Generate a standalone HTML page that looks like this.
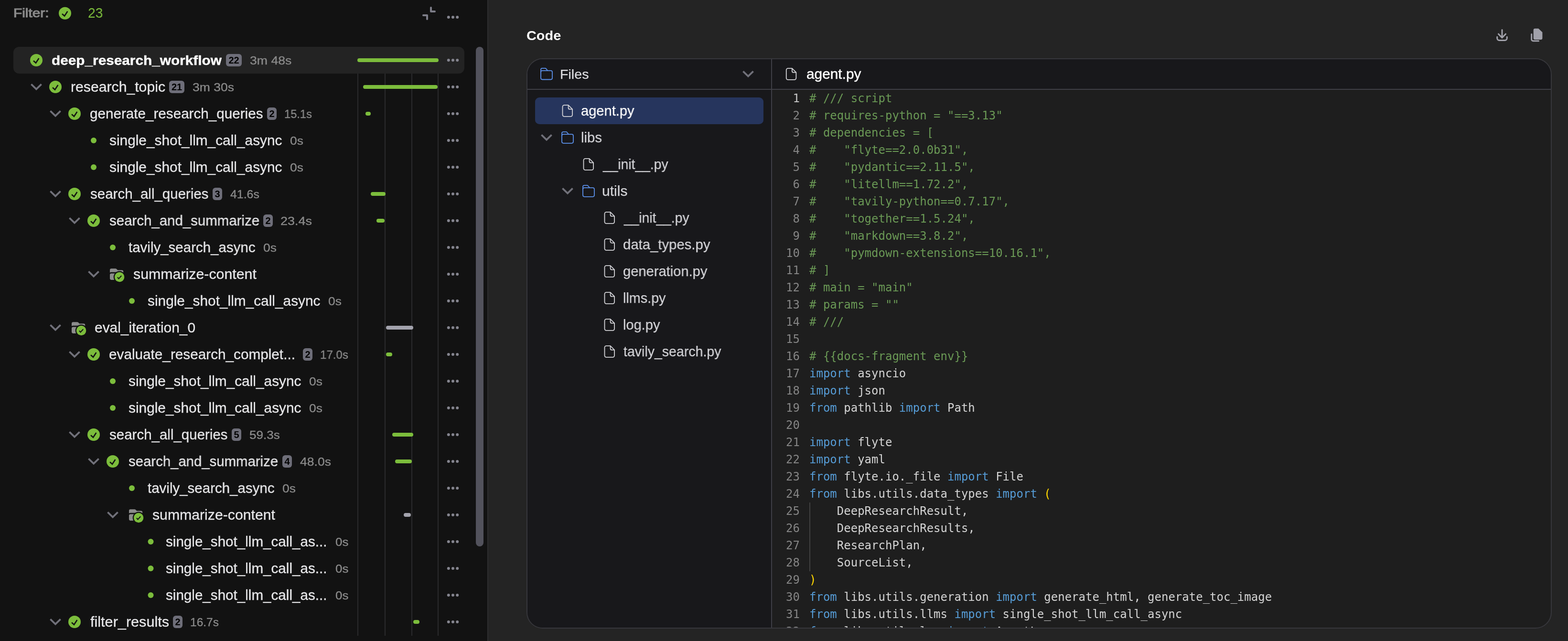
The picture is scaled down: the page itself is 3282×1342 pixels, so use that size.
<!DOCTYPE html><html><head><meta charset="utf-8"><title>Run details</title><style>
html,body{margin:0;padding:0;background:#242424}body{width:3282px;height:1342px;position:relative;overflow:hidden;font-family:'Liberation Sans', sans-serif}
.t{position:absolute;white-space:pre;line-height:0;transform-origin:0 0;will-change:transform}
</style></head><body>
<div style="position:absolute;left:0px;top:0px;width:1020px;height:1342px;background:#121212;border-radius:0px;"></div>
<div style="position:absolute;left:1020px;top:0px;width:2px;height:1342px;background:#2e2e30;border-radius:0px;"></div>
<div style="position:absolute;left:28px;top:98px;width:944px;height:56px;background:#232323;border-radius:12px;"></div>
<div style="position:absolute;left:748px;top:154px;width:2px;height:1177px;background:#2a2a2c;border-radius:0px;"></div>
<div style="position:absolute;left:805px;top:154px;width:2px;height:1177px;background:#2a2a2c;border-radius:0px;"></div>
<div style="position:absolute;left:861px;top:154px;width:2px;height:1177px;background:#2a2a2c;border-radius:0px;"></div>
<div style="position:absolute;left:916px;top:154px;width:2px;height:1177px;background:#2a2a2c;border-radius:0px;"></div>
<div style="position:absolute;left:996px;top:98px;width:16px;height:1046px;background:#52525c;border-radius:8px;"></div>
<div style="position:absolute;left:473px;top:113px;width:33px;height:26px;background:#6e6e79;border-radius:6px;color:#000;font:700 20px/26px 'Liberation Sans', sans-serif;text-align:center;will-change:transform">22</div>
<div style="position:absolute;left:748px;top:122px;width:170px;height:8px;background:#7cbd3c;border-radius:4px;"></div>
<div style="position:absolute;left:354px;top:169px;width:32px;height:26px;background:#6e6e79;border-radius:6px;color:#000;font:700 20px/26px 'Liberation Sans', sans-serif;text-align:center;will-change:transform">21</div>
<div style="position:absolute;left:760px;top:178px;width:156px;height:8px;background:#7cbd3c;border-radius:4px;"></div>
<div style="position:absolute;left:559px;top:225px;width:20px;height:26px;background:#6e6e79;border-radius:6px;color:#000;font:700 20px/26px 'Liberation Sans', sans-serif;text-align:center;will-change:transform">2</div>
<div style="position:absolute;left:765px;top:234px;width:11px;height:8px;background:#7cbd3c;border-radius:4px;"></div>
<div style="position:absolute;left:445px;top:393px;width:20px;height:26px;background:#6e6e79;border-radius:6px;color:#000;font:700 20px/26px 'Liberation Sans', sans-serif;text-align:center;will-change:transform">3</div>
<div style="position:absolute;left:776px;top:402px;width:31px;height:8px;background:#7cbd3c;border-radius:4px;"></div>
<div style="position:absolute;left:551px;top:449px;width:20px;height:26px;background:#6e6e79;border-radius:6px;color:#000;font:700 20px/26px 'Liberation Sans', sans-serif;text-align:center;will-change:transform">2</div>
<div style="position:absolute;left:788px;top:458px;width:17px;height:8px;background:#7cbd3c;border-radius:4px;"></div>
<div style="position:absolute;left:808px;top:682px;width:57px;height:8px;background:#a3a3ad;border-radius:4px;"></div>
<div style="position:absolute;left:634px;top:729px;width:20px;height:26px;background:#6e6e79;border-radius:6px;color:#000;font:700 20px/26px 'Liberation Sans', sans-serif;text-align:center;will-change:transform">2</div>
<div style="position:absolute;left:808px;top:738px;width:12.799999999999955px;height:8px;background:#7cbd3c;border-radius:4px;"></div>
<div style="position:absolute;left:485px;top:897px;width:20px;height:26px;background:#6e6e79;border-radius:6px;color:#000;font:700 20px/26px 'Liberation Sans', sans-serif;text-align:center;will-change:transform">5</div>
<div style="position:absolute;left:821px;top:906px;width:44px;height:8px;background:#7cbd3c;border-radius:4px;"></div>
<div style="position:absolute;left:591px;top:953px;width:20px;height:26px;background:#6e6e79;border-radius:6px;color:#000;font:700 20px/26px 'Liberation Sans', sans-serif;text-align:center;will-change:transform">4</div>
<div style="position:absolute;left:826.5px;top:962px;width:35.5px;height:8px;background:#7cbd3c;border-radius:4px;"></div>
<div style="position:absolute;left:844.5px;top:1074px;width:15.5px;height:8px;background:#a3a3ad;border-radius:4px;"></div>
<div style="position:absolute;left:362px;top:1289px;width:20px;height:26px;background:#6e6e79;border-radius:6px;color:#000;font:700 20px/26px 'Liberation Sans', sans-serif;text-align:center;will-change:transform">2</div>
<div style="position:absolute;left:864.6px;top:1298px;width:13.399999999999977px;height:8px;background:#7cbd3c;border-radius:4px;"></div>
<div style="position:absolute;left:1022px;top:0px;width:2260px;height:1342px;background:#242424;border-radius:0px;"></div>
<div style="position:absolute;left:1102px;top:122px;width:2146px;height:1194px;box-sizing:border-box;border:2px solid #37373c;border-radius:34px;background:#1e1e1e;overflow:hidden"><div style="position:absolute;left:0;top:0;width:510px;height:100%;background:#18181b"></div><div style="position:absolute;left:0;top:0;width:100%;height:62px;background:#18181b"></div><div style="position:absolute;left:0;top:62px;width:100%;height:2px;background:#3f3f46"></div><div style="position:absolute;left:510px;top:0;width:2px;height:100%;background:#3f3f46"></div></div>
<div style="position:absolute;left:1120px;top:204px;width:478px;height:56px;background:#26355d;border-radius:9px;"></div>
<div style="position:absolute;left:1616px;top:188px;width:1630px;height:1126px;overflow:hidden;will-change:transform;font:24px/36px 'DejaVu Sans Mono', 'Liberation Mono', monospace"><div style="height:36px;white-space:pre"><span style="position:absolute;left:0;width:58.0px;text-align:right;color:#c6c6c6">1</span><span style="position:absolute;left:78.0px;color:#6a9955"># /// script</span></div><div style="height:36px;white-space:pre"><span style="position:absolute;left:0;width:58.0px;text-align:right;color:#858585">2</span><span style="position:absolute;left:78.0px;color:#6a9955"># requires-python = "==3.13"</span></div><div style="height:36px;white-space:pre"><span style="position:absolute;left:0;width:58.0px;text-align:right;color:#858585">3</span><span style="position:absolute;left:78.0px;color:#6a9955"># dependencies = [</span></div><div style="height:36px;white-space:pre"><span style="position:absolute;left:0;width:58.0px;text-align:right;color:#858585">4</span><span style="position:absolute;left:78.0px;color:#6a9955">#    "flyte==2.0.0b31",</span></div><div style="height:36px;white-space:pre"><span style="position:absolute;left:0;width:58.0px;text-align:right;color:#858585">5</span><span style="position:absolute;left:78.0px;color:#6a9955">#    "pydantic==2.11.5",</span></div><div style="height:36px;white-space:pre"><span style="position:absolute;left:0;width:58.0px;text-align:right;color:#858585">6</span><span style="position:absolute;left:78.0px;color:#6a9955">#    "litellm==1.72.2",</span></div><div style="height:36px;white-space:pre"><span style="position:absolute;left:0;width:58.0px;text-align:right;color:#858585">7</span><span style="position:absolute;left:78.0px;color:#6a9955">#    "tavily-python==0.7.17",</span></div><div style="height:36px;white-space:pre"><span style="position:absolute;left:0;width:58.0px;text-align:right;color:#858585">8</span><span style="position:absolute;left:78.0px;color:#6a9955">#    "together==1.5.24",</span></div><div style="height:36px;white-space:pre"><span style="position:absolute;left:0;width:58.0px;text-align:right;color:#858585">9</span><span style="position:absolute;left:78.0px;color:#6a9955">#    "markdown==3.8.2",</span></div><div style="height:36px;white-space:pre"><span style="position:absolute;left:0;width:58.0px;text-align:right;color:#858585">10</span><span style="position:absolute;left:78.0px;color:#6a9955">#    "pymdown-extensions==10.16.1",</span></div><div style="height:36px;white-space:pre"><span style="position:absolute;left:0;width:58.0px;text-align:right;color:#858585">11</span><span style="position:absolute;left:78.0px;color:#6a9955"># ]</span></div><div style="height:36px;white-space:pre"><span style="position:absolute;left:0;width:58.0px;text-align:right;color:#858585">12</span><span style="position:absolute;left:78.0px;color:#6a9955"># main = "main"</span></div><div style="height:36px;white-space:pre"><span style="position:absolute;left:0;width:58.0px;text-align:right;color:#858585">13</span><span style="position:absolute;left:78.0px;color:#6a9955"># params = ""</span></div><div style="height:36px;white-space:pre"><span style="position:absolute;left:0;width:58.0px;text-align:right;color:#858585">14</span><span style="position:absolute;left:78.0px;color:#6a9955"># ///</span></div><div style="height:36px;white-space:pre"><span style="position:absolute;left:0;width:58.0px;text-align:right;color:#858585">15</span><span style="position:absolute;left:78.0px;color:#d4d4d4"></span></div><div style="height:36px;white-space:pre"><span style="position:absolute;left:0;width:58.0px;text-align:right;color:#858585">16</span><span style="position:absolute;left:78.0px;color:#6a9955"># {{docs-fragment env}}</span></div><div style="height:36px;white-space:pre"><span style="position:absolute;left:0;width:58.0px;text-align:right;color:#858585">17</span><span style="position:absolute;left:78.0px;color:#d4d4d4"><span style="color:#569cd6">import</span> asyncio</span></div><div style="height:36px;white-space:pre"><span style="position:absolute;left:0;width:58.0px;text-align:right;color:#858585">18</span><span style="position:absolute;left:78.0px;color:#d4d4d4"><span style="color:#569cd6">import</span> json</span></div><div style="height:36px;white-space:pre"><span style="position:absolute;left:0;width:58.0px;text-align:right;color:#858585">19</span><span style="position:absolute;left:78.0px;color:#d4d4d4"><span style="color:#569cd6">from</span> pathlib <span style="color:#569cd6">import</span> Path</span></div><div style="height:36px;white-space:pre"><span style="position:absolute;left:0;width:58.0px;text-align:right;color:#858585">20</span><span style="position:absolute;left:78.0px;color:#d4d4d4"></span></div><div style="height:36px;white-space:pre"><span style="position:absolute;left:0;width:58.0px;text-align:right;color:#858585">21</span><span style="position:absolute;left:78.0px;color:#d4d4d4"><span style="color:#569cd6">import</span> flyte</span></div><div style="height:36px;white-space:pre"><span style="position:absolute;left:0;width:58.0px;text-align:right;color:#858585">22</span><span style="position:absolute;left:78.0px;color:#d4d4d4"><span style="color:#569cd6">import</span> yaml</span></div><div style="height:36px;white-space:pre"><span style="position:absolute;left:0;width:58.0px;text-align:right;color:#858585">23</span><span style="position:absolute;left:78.0px;color:#d4d4d4"><span style="color:#569cd6">from</span> flyte.io._file <span style="color:#569cd6">import</span> File</span></div><div style="height:36px;white-space:pre"><span style="position:absolute;left:0;width:58.0px;text-align:right;color:#858585">24</span><span style="position:absolute;left:78.0px;color:#d4d4d4"><span style="color:#569cd6">from</span> libs.utils.data_types <span style="color:#569cd6">import</span> <span style="color:#ffd700">(</span></span></div><div style="height:36px;white-space:pre"><span style="position:absolute;left:0;width:58.0px;text-align:right;color:#858585">25</span><span style="position:absolute;left:78.0px;color:#d4d4d4">    DeepResearchResult,</span></div><div style="height:36px;white-space:pre"><span style="position:absolute;left:0;width:58.0px;text-align:right;color:#858585">26</span><span style="position:absolute;left:78.0px;color:#d4d4d4">    DeepResearchResults,</span></div><div style="height:36px;white-space:pre"><span style="position:absolute;left:0;width:58.0px;text-align:right;color:#858585">27</span><span style="position:absolute;left:78.0px;color:#d4d4d4">    ResearchPlan,</span></div><div style="height:36px;white-space:pre"><span style="position:absolute;left:0;width:58.0px;text-align:right;color:#858585">28</span><span style="position:absolute;left:78.0px;color:#d4d4d4">    SourceList,</span></div><div style="height:36px;white-space:pre"><span style="position:absolute;left:0;width:58.0px;text-align:right;color:#858585">29</span><span style="position:absolute;left:78.0px;color:#d4d4d4"><span style="color:#ffd700">)</span></span></div><div style="height:36px;white-space:pre"><span style="position:absolute;left:0;width:58.0px;text-align:right;color:#858585">30</span><span style="position:absolute;left:78.0px;color:#d4d4d4"><span style="color:#569cd6">from</span> libs.utils.generation <span style="color:#569cd6">import</span> generate_html, generate_toc_image</span></div><div style="height:36px;white-space:pre"><span style="position:absolute;left:0;width:58.0px;text-align:right;color:#858585">31</span><span style="position:absolute;left:78.0px;color:#d4d4d4"><span style="color:#569cd6">from</span> libs.utils.llms <span style="color:#569cd6">import</span> single_shot_llm_call_async</span></div><div style="height:36px;white-space:pre"><span style="position:absolute;left:0;width:58.0px;text-align:right;color:#858585">32</span><span style="position:absolute;left:78.0px;color:#d4d4d4"><span style="color:#569cd6">from</span> libs.utils.log <span style="color:#569cd6">import</span> AgentLogger</span></div></div>
<div style="position:absolute;left:1694px;top:1052px;width:2px;height:144px;background:#404040;border-radius:0px;"></div>
<svg style="position:absolute;left:0;top:0" width="3282" height="1342" viewBox="0 0 3282 1342"><circle cx="136" cy="27.75" r="13.0" fill="#7cbd3c"/><path d="M130.00 29.05 L135.00 33.45 L141.40 23.75" fill="none" stroke="#121212" stroke-width="2.60" stroke-linejoin="miter"/><path d="M902 16 V24 H910 M886 32 H894 V40" fill="none" stroke="#7c7c87" stroke-width="4" stroke-linecap="round" stroke-linejoin="round"/><circle cx="938.8" cy="36" r="3" fill="#85858f"/><circle cx="948" cy="36" r="3" fill="#85858f"/><circle cx="957.2" cy="36" r="3" fill="#85858f"/><circle cx="76" cy="126" r="13.0" fill="#7cbd3c"/><path d="M70.00 127.30 L75.00 131.70 L81.40 122.00" fill="none" stroke="#121212" stroke-width="2.60" stroke-linejoin="miter"/><circle cx="938.8" cy="126" r="3" fill="#85858f"/><circle cx="948" cy="126" r="3" fill="#85858f"/><circle cx="957.2" cy="126" r="3" fill="#85858f"/><path d="M65.40 176.40 L76.00 186.60 L86.60 176.40" fill="none" stroke="#71717a" stroke-width="3.8" stroke-linejoin="miter"/><circle cx="116" cy="182" r="13.0" fill="#7cbd3c"/><path d="M110.00 183.30 L115.00 187.70 L121.40 178.00" fill="none" stroke="#121212" stroke-width="2.60" stroke-linejoin="miter"/><circle cx="938.8" cy="182" r="3" fill="#85858f"/><circle cx="948" cy="182" r="3" fill="#85858f"/><circle cx="957.2" cy="182" r="3" fill="#85858f"/><path d="M105.40 232.40 L116.00 242.60 L126.60 232.40" fill="none" stroke="#71717a" stroke-width="3.8" stroke-linejoin="miter"/><circle cx="156" cy="238" r="13.0" fill="#7cbd3c"/><path d="M150.00 239.30 L155.00 243.70 L161.40 234.00" fill="none" stroke="#121212" stroke-width="2.60" stroke-linejoin="miter"/><circle cx="938.8" cy="238" r="3" fill="#85858f"/><circle cx="948" cy="238" r="3" fill="#85858f"/><circle cx="957.2" cy="238" r="3" fill="#85858f"/><circle cx="196" cy="294" r="6" fill="#7cbd3c"/><circle cx="938.8" cy="294" r="3" fill="#85858f"/><circle cx="948" cy="294" r="3" fill="#85858f"/><circle cx="957.2" cy="294" r="3" fill="#85858f"/><circle cx="196" cy="350" r="6" fill="#7cbd3c"/><circle cx="938.8" cy="350" r="3" fill="#85858f"/><circle cx="948" cy="350" r="3" fill="#85858f"/><circle cx="957.2" cy="350" r="3" fill="#85858f"/><path d="M105.40 400.40 L116.00 410.60 L126.60 400.40" fill="none" stroke="#71717a" stroke-width="3.8" stroke-linejoin="miter"/><circle cx="156" cy="406" r="13.0" fill="#7cbd3c"/><path d="M150.00 407.30 L155.00 411.70 L161.40 402.00" fill="none" stroke="#121212" stroke-width="2.60" stroke-linejoin="miter"/><circle cx="938.8" cy="406" r="3" fill="#85858f"/><circle cx="948" cy="406" r="3" fill="#85858f"/><circle cx="957.2" cy="406" r="3" fill="#85858f"/><path d="M145.40 456.40 L156.00 466.60 L166.60 456.40" fill="none" stroke="#71717a" stroke-width="3.8" stroke-linejoin="miter"/><circle cx="196" cy="462" r="13.0" fill="#7cbd3c"/><path d="M190.00 463.30 L195.00 467.70 L201.40 458.00" fill="none" stroke="#121212" stroke-width="2.60" stroke-linejoin="miter"/><circle cx="938.8" cy="462" r="3" fill="#85858f"/><circle cx="948" cy="462" r="3" fill="#85858f"/><circle cx="957.2" cy="462" r="3" fill="#85858f"/><circle cx="236" cy="518" r="6" fill="#7cbd3c"/><circle cx="938.8" cy="518" r="3" fill="#85858f"/><circle cx="948" cy="518" r="3" fill="#85858f"/><circle cx="957.2" cy="518" r="3" fill="#85858f"/><path d="M185.40 568.40 L196.00 578.60 L206.60 568.40" fill="none" stroke="#71717a" stroke-width="3.8" stroke-linejoin="miter"/><path transform="translate(226.48 557.10) scale(1.76 1.70)" d="M3.75 3A1.75 1.75 0 0 0 2 4.75v3.26a3.235 3.235 0 0 1 1.75-.51h12.5c.644 0 1.245.188 1.75.51V6.75A1.75 1.75 0 0 0 16.25 5h-4.836a.25.25 0 0 1-.177-.073L9.823 3.513A1.75 1.75 0 0 0 8.586 3H3.75ZM3.75 9A1.75 1.75 0 0 0 2 10.75v4.5c0 .966.784 1.75 1.75 1.75h12.5A1.75 1.75 0 0 0 18 15.25v-4.5A1.75 1.75 0 0 0 16.25 9H3.75Z" fill="#8c8c8c"/><circle cx="250.1" cy="580" r="12.399999999999999" fill="#121212"/><circle cx="250.1" cy="580" r="10.2" fill="#7cbd3c"/><path d="M245.90 580.50 L248.50 583.40 L254.20 577.20" fill="none" stroke="#121212" stroke-width="2" stroke-linejoin="miter"/><circle cx="938.8" cy="574" r="3" fill="#85858f"/><circle cx="948" cy="574" r="3" fill="#85858f"/><circle cx="957.2" cy="574" r="3" fill="#85858f"/><circle cx="276" cy="630" r="6" fill="#7cbd3c"/><circle cx="938.8" cy="630" r="3" fill="#85858f"/><circle cx="948" cy="630" r="3" fill="#85858f"/><circle cx="957.2" cy="630" r="3" fill="#85858f"/><path d="M105.40 680.40 L116.00 690.60 L126.60 680.40" fill="none" stroke="#71717a" stroke-width="3.8" stroke-linejoin="miter"/><path transform="translate(146.48 669.10) scale(1.76 1.70)" d="M3.75 3A1.75 1.75 0 0 0 2 4.75v3.26a3.235 3.235 0 0 1 1.75-.51h12.5c.644 0 1.245.188 1.75.51V6.75A1.75 1.75 0 0 0 16.25 5h-4.836a.25.25 0 0 1-.177-.073L9.823 3.513A1.75 1.75 0 0 0 8.586 3H3.75ZM3.75 9A1.75 1.75 0 0 0 2 10.75v4.5c0 .966.784 1.75 1.75 1.75h12.5A1.75 1.75 0 0 0 18 15.25v-4.5A1.75 1.75 0 0 0 16.25 9H3.75Z" fill="#8c8c8c"/><circle cx="170.1" cy="692" r="12.399999999999999" fill="#121212"/><circle cx="170.1" cy="692" r="10.2" fill="#7cbd3c"/><path d="M165.90 692.50 L168.50 695.40 L174.20 689.20" fill="none" stroke="#121212" stroke-width="2" stroke-linejoin="miter"/><circle cx="938.8" cy="686" r="3" fill="#85858f"/><circle cx="948" cy="686" r="3" fill="#85858f"/><circle cx="957.2" cy="686" r="3" fill="#85858f"/><path d="M145.40 736.40 L156.00 746.60 L166.60 736.40" fill="none" stroke="#71717a" stroke-width="3.8" stroke-linejoin="miter"/><circle cx="196" cy="742" r="13.0" fill="#7cbd3c"/><path d="M190.00 743.30 L195.00 747.70 L201.40 738.00" fill="none" stroke="#121212" stroke-width="2.60" stroke-linejoin="miter"/><circle cx="938.8" cy="742" r="3" fill="#85858f"/><circle cx="948" cy="742" r="3" fill="#85858f"/><circle cx="957.2" cy="742" r="3" fill="#85858f"/><circle cx="236" cy="798" r="6" fill="#7cbd3c"/><circle cx="938.8" cy="798" r="3" fill="#85858f"/><circle cx="948" cy="798" r="3" fill="#85858f"/><circle cx="957.2" cy="798" r="3" fill="#85858f"/><circle cx="236" cy="854" r="6" fill="#7cbd3c"/><circle cx="938.8" cy="854" r="3" fill="#85858f"/><circle cx="948" cy="854" r="3" fill="#85858f"/><circle cx="957.2" cy="854" r="3" fill="#85858f"/><path d="M145.40 904.40 L156.00 914.60 L166.60 904.40" fill="none" stroke="#71717a" stroke-width="3.8" stroke-linejoin="miter"/><circle cx="196" cy="910" r="13.0" fill="#7cbd3c"/><path d="M190.00 911.30 L195.00 915.70 L201.40 906.00" fill="none" stroke="#121212" stroke-width="2.60" stroke-linejoin="miter"/><circle cx="938.8" cy="910" r="3" fill="#85858f"/><circle cx="948" cy="910" r="3" fill="#85858f"/><circle cx="957.2" cy="910" r="3" fill="#85858f"/><path d="M185.40 960.40 L196.00 970.60 L206.60 960.40" fill="none" stroke="#71717a" stroke-width="3.8" stroke-linejoin="miter"/><circle cx="236" cy="966" r="13.0" fill="#7cbd3c"/><path d="M230.00 967.30 L235.00 971.70 L241.40 962.00" fill="none" stroke="#121212" stroke-width="2.60" stroke-linejoin="miter"/><circle cx="938.8" cy="966" r="3" fill="#85858f"/><circle cx="948" cy="966" r="3" fill="#85858f"/><circle cx="957.2" cy="966" r="3" fill="#85858f"/><circle cx="276" cy="1022" r="6" fill="#7cbd3c"/><circle cx="938.8" cy="1022" r="3" fill="#85858f"/><circle cx="948" cy="1022" r="3" fill="#85858f"/><circle cx="957.2" cy="1022" r="3" fill="#85858f"/><path d="M225.40 1072.40 L236.00 1082.60 L246.60 1072.40" fill="none" stroke="#71717a" stroke-width="3.8" stroke-linejoin="miter"/><path transform="translate(266.48 1061.10) scale(1.76 1.70)" d="M3.75 3A1.75 1.75 0 0 0 2 4.75v3.26a3.235 3.235 0 0 1 1.75-.51h12.5c.644 0 1.245.188 1.75.51V6.75A1.75 1.75 0 0 0 16.25 5h-4.836a.25.25 0 0 1-.177-.073L9.823 3.513A1.75 1.75 0 0 0 8.586 3H3.75ZM3.75 9A1.75 1.75 0 0 0 2 10.75v4.5c0 .966.784 1.75 1.75 1.75h12.5A1.75 1.75 0 0 0 18 15.25v-4.5A1.75 1.75 0 0 0 16.25 9H3.75Z" fill="#8c8c8c"/><circle cx="290.1" cy="1084" r="12.399999999999999" fill="#121212"/><circle cx="290.1" cy="1084" r="10.2" fill="#7cbd3c"/><path d="M285.90 1084.50 L288.50 1087.40 L294.20 1081.20" fill="none" stroke="#121212" stroke-width="2" stroke-linejoin="miter"/><circle cx="938.8" cy="1078" r="3" fill="#85858f"/><circle cx="948" cy="1078" r="3" fill="#85858f"/><circle cx="957.2" cy="1078" r="3" fill="#85858f"/><circle cx="315.5" cy="1134" r="6" fill="#7cbd3c"/><circle cx="938.8" cy="1134" r="3" fill="#85858f"/><circle cx="948" cy="1134" r="3" fill="#85858f"/><circle cx="957.2" cy="1134" r="3" fill="#85858f"/><circle cx="315.5" cy="1190" r="6" fill="#7cbd3c"/><circle cx="938.8" cy="1190" r="3" fill="#85858f"/><circle cx="948" cy="1190" r="3" fill="#85858f"/><circle cx="957.2" cy="1190" r="3" fill="#85858f"/><circle cx="315.5" cy="1246" r="6" fill="#7cbd3c"/><circle cx="938.8" cy="1246" r="3" fill="#85858f"/><circle cx="948" cy="1246" r="3" fill="#85858f"/><circle cx="957.2" cy="1246" r="3" fill="#85858f"/><path d="M105.40 1296.40 L116.00 1306.60 L126.60 1296.40" fill="none" stroke="#71717a" stroke-width="3.8" stroke-linejoin="miter"/><circle cx="156" cy="1302" r="13.0" fill="#7cbd3c"/><path d="M150.00 1303.30 L155.00 1307.70 L161.40 1298.00" fill="none" stroke="#121212" stroke-width="2.60" stroke-linejoin="miter"/><circle cx="938.8" cy="1302" r="3" fill="#85858f"/><circle cx="948" cy="1302" r="3" fill="#85858f"/><circle cx="957.2" cy="1302" r="3" fill="#85858f"/><g fill="none" stroke="#a1a1aa" stroke-width="3" stroke-linecap="round" stroke-linejoin="round"><path d="M3144 62.5 V79 M3136.5 71.2 L3144 79 L3151.5 71.2"/><path d="M3133.7 77.2 v2.8 a4.5 4.5 0 0 0 4.5 4.5 h11.6 a4.5 4.5 0 0 0 4.5 -4.5 v-2.8"/><path d="M3205.7 71.5 V82.5 a3.2 3.2 0 0 0 3.2 3.2 H3220.5"/></g><path d="M3213 59.7 h7.2 l8.2 7.8 v12.2 a3.3 3.3 0 0 1 -3.3 3.3 h-12.1 a3.3 3.3 0 0 1 -3.3 -3.3 v-16.7 a3.3 3.3 0 0 1 3.3 -3.3 z" fill="#a1a1aa"/><g fill="none" stroke="#5b90ea" stroke-width="1.8" stroke-linejoin="round"><rect x="1132" y="147.89999999999998" width="24" height="18.6" rx="3.2"/><path d="M1132 151.39999999999998 V145.89999999999998 a3 3 0 0 1 3 -3 h6 a2.5 2.5 0 0 1 2 1 l3.2 4"/></g><path d="M1555.40 149.40 L1566.00 159.60 L1576.60 149.40" fill="none" stroke="#71717a" stroke-width="3.8" stroke-linejoin="miter"/><g fill="none" stroke="#d4d4d8" stroke-width="1.8" stroke-linejoin="round"><path d="M1649.3 143.15 h8.6 l8.5 8.5 v11.7 a3.5 3.5 0 0 1 -3.5 3.5 h-13.6 a3.5 3.5 0 0 1 -3.5 -3.5 v-16.7 a3.5 3.5 0 0 1 3.5 -3.5 z"/><path d="M1657.8999999999999 143.65 v5 a3 3 0 0 0 3 3 h5"/></g><g fill="none" stroke="#d4d4d8" stroke-width="1.8" stroke-linejoin="round"><path d="M1181.0 220.15 h8.6 l8.5 8.5 v11.7 a3.5 3.5 0 0 1 -3.5 3.5 h-13.6 a3.5 3.5 0 0 1 -3.5 -3.5 v-16.7 a3.5 3.5 0 0 1 3.5 -3.5 z"/><path d="M1189.6 220.65 v5 a3 3 0 0 0 3 3 h5"/></g><path d="M1133.40 282.40 L1144.00 292.60 L1154.60 282.40" fill="none" stroke="#71717a" stroke-width="3.8" stroke-linejoin="miter"/><g fill="none" stroke="#5b90ea" stroke-width="1.8" stroke-linejoin="round"><rect x="1176" y="281.2" width="24" height="18.6" rx="3.2"/><path d="M1176 284.7 V279.2 a3 3 0 0 1 3 -3 h6 a2.5 2.5 0 0 1 2 1 l3.2 4"/></g><g fill="none" stroke="#d4d4d8" stroke-width="1.8" stroke-linejoin="round"><path d="M1225.0 332.15 h8.6 l8.5 8.5 v11.7 a3.5 3.5 0 0 1 -3.5 3.5 h-13.6 a3.5 3.5 0 0 1 -3.5 -3.5 v-16.7 a3.5 3.5 0 0 1 3.5 -3.5 z"/><path d="M1233.6 332.65 v5 a3 3 0 0 0 3 3 h5"/></g><path d="M1177.40 394.40 L1188.00 404.60 L1198.60 394.40" fill="none" stroke="#71717a" stroke-width="3.8" stroke-linejoin="miter"/><g fill="none" stroke="#5b90ea" stroke-width="1.8" stroke-linejoin="round"><rect x="1220" y="393.2" width="24" height="18.6" rx="3.2"/><path d="M1220 396.7 V391.2 a3 3 0 0 1 3 -3 h6 a2.5 2.5 0 0 1 2 1 l3.2 4"/></g><g fill="none" stroke="#d4d4d8" stroke-width="1.8" stroke-linejoin="round"><path d="M1269.0 444.15 h8.6 l8.5 8.5 v11.7 a3.5 3.5 0 0 1 -3.5 3.5 h-13.6 a3.5 3.5 0 0 1 -3.5 -3.5 v-16.7 a3.5 3.5 0 0 1 3.5 -3.5 z"/><path d="M1277.6 444.65 v5 a3 3 0 0 0 3 3 h5"/></g><g fill="none" stroke="#d4d4d8" stroke-width="1.8" stroke-linejoin="round"><path d="M1269.0 500.15 h8.6 l8.5 8.5 v11.7 a3.5 3.5 0 0 1 -3.5 3.5 h-13.6 a3.5 3.5 0 0 1 -3.5 -3.5 v-16.7 a3.5 3.5 0 0 1 3.5 -3.5 z"/><path d="M1277.6 500.65 v5 a3 3 0 0 0 3 3 h5"/></g><g fill="none" stroke="#d4d4d8" stroke-width="1.8" stroke-linejoin="round"><path d="M1269.0 556.15 h8.6 l8.5 8.5 v11.7 a3.5 3.5 0 0 1 -3.5 3.5 h-13.6 a3.5 3.5 0 0 1 -3.5 -3.5 v-16.7 a3.5 3.5 0 0 1 3.5 -3.5 z"/><path d="M1277.6 556.65 v5 a3 3 0 0 0 3 3 h5"/></g><g fill="none" stroke="#d4d4d8" stroke-width="1.8" stroke-linejoin="round"><path d="M1269.0 612.15 h8.6 l8.5 8.5 v11.7 a3.5 3.5 0 0 1 -3.5 3.5 h-13.6 a3.5 3.5 0 0 1 -3.5 -3.5 v-16.7 a3.5 3.5 0 0 1 3.5 -3.5 z"/><path d="M1277.6 612.65 v5 a3 3 0 0 0 3 3 h5"/></g><g fill="none" stroke="#d4d4d8" stroke-width="1.8" stroke-linejoin="round"><path d="M1269.0 668.15 h8.6 l8.5 8.5 v11.7 a3.5 3.5 0 0 1 -3.5 3.5 h-13.6 a3.5 3.5 0 0 1 -3.5 -3.5 v-16.7 a3.5 3.5 0 0 1 3.5 -3.5 z"/><path d="M1277.6 668.65 v5 a3 3 0 0 0 3 3 h5"/></g><g fill="none" stroke="#d4d4d8" stroke-width="1.8" stroke-linejoin="round"><path d="M1269.0 724.15 h8.6 l8.5 8.5 v11.7 a3.5 3.5 0 0 1 -3.5 3.5 h-13.6 a3.5 3.5 0 0 1 -3.5 -3.5 v-16.7 a3.5 3.5 0 0 1 3.5 -3.5 z"/><path d="M1277.6 724.65 v5 a3 3 0 0 0 3 3 h5"/></g></svg>
<span class="t" id="t0" style="left:27.66px;top:26.99px;font-size:26px;color:#8a8a8a;font-weight:400;transform:scaleX(1.1468);-webkit-text-stroke:1.1px #8a8a8a">Filter:</span>
<span class="t" id="t1" style="left:184.45px;top:26.88px;font-size:29.5px;color:#7cbd3c;font-weight:400;transform:scaleX(0.9520)">23</span>
<span class="t" id="t2" style="left:107.66px;top:126.12px;font-size:28.5px;color:#ffffff;font-weight:700;transform:scaleX(1.0447);-webkit-text-stroke:0.4px #ffffff">deep_research_workflow</span>
<span class="t" id="t3" style="left:522.67px;top:126.51px;font-size:24.5px;color:#8a8a8a;font-weight:400;transform:scaleX(1.0881);-webkit-text-stroke:0.35px #8a8a8a">3m 48s</span>
<span class="t" id="t4" style="left:148.13px;top:182.08px;font-size:29.5px;color:#e6e6e8;font-weight:400;transform:scaleX(1.0232);-webkit-text-stroke:0.3px #e6e6e8">research_topic</span>
<span class="t" id="t5" style="left:403.18px;top:182.51px;font-size:24.5px;color:#8a8a8a;font-weight:400;transform:scaleX(1.0819);-webkit-text-stroke:0.35px #8a8a8a">3m 30s</span>
<span class="t" id="t6" style="left:188.15px;top:238.08px;font-size:29.5px;color:#e6e6e8;font-weight:400;transform:scaleX(1.0046);-webkit-text-stroke:0.3px #e6e6e8">generate_research_queries</span>
<span class="t" id="t7" style="left:595.21px;top:238.51px;font-size:24.5px;color:#8a8a8a;font-weight:400;transform:scaleX(0.9653);-webkit-text-stroke:0.35px #8a8a8a">15.1s</span>
<span class="t" id="t8" style="left:229.15px;top:294.08px;font-size:29.5px;color:#e6e6e8;font-weight:400;transform:scaleX(1.0112);-webkit-text-stroke:0.3px #e6e6e8">single_shot_llm_call_async</span>
<span class="t" id="t9" style="left:607.17px;top:294.51px;font-size:24.5px;color:#8a8a8a;font-weight:400;transform:scaleX(1.0790);-webkit-text-stroke:0.35px #8a8a8a">0s</span>
<span class="t" id="t10" style="left:229.15px;top:350.08px;font-size:29.5px;color:#e6e6e8;font-weight:400;transform:scaleX(1.0112);-webkit-text-stroke:0.3px #e6e6e8">single_shot_llm_call_async</span>
<span class="t" id="t11" style="left:607.17px;top:350.51px;font-size:24.5px;color:#8a8a8a;font-weight:400;transform:scaleX(1.0790);-webkit-text-stroke:0.35px #8a8a8a">0s</span>
<span class="t" id="t12" style="left:189.15px;top:406.08px;font-size:29.5px;color:#e6e6e8;font-weight:400;transform:scaleX(0.9993);-webkit-text-stroke:0.3px #e6e6e8">search_all_queries</span>
<span class="t" id="t13" style="left:482.18px;top:406.51px;font-size:24.5px;color:#8a8a8a;font-weight:400;transform:scaleX(1.0162);-webkit-text-stroke:0.35px #8a8a8a">41.6s</span>
<span class="t" id="t14" style="left:229.15px;top:462.08px;font-size:29.5px;color:#e6e6e8;font-weight:400;transform:scaleX(0.9977);-webkit-text-stroke:0.3px #e6e6e8">search_and_summarize</span>
<span class="t" id="t15" style="left:587.07px;top:462.51px;font-size:24.5px;color:#8a8a8a;font-weight:400;transform:scaleX(1.1017);-webkit-text-stroke:0.35px #8a8a8a">23.4s</span>
<span class="t" id="t16" style="left:269.15px;top:518.08px;font-size:29.5px;color:#e6e6e8;font-weight:400;transform:scaleX(0.9993);-webkit-text-stroke:0.3px #e6e6e8">tavily_search_async</span>
<span class="t" id="t17" style="left:551.17px;top:518.51px;font-size:24.5px;color:#8a8a8a;font-weight:400;transform:scaleX(1.0790);-webkit-text-stroke:0.35px #8a8a8a">0s</span>
<span class="t" id="t18" style="left:279.15px;top:574.08px;font-size:29.5px;color:#e6e6e8;font-weight:400;transform:scaleX(1.0282);-webkit-text-stroke:0.3px #e6e6e8">summarize-content</span>
<span class="t" id="t19" style="left:309.15px;top:630.08px;font-size:29.5px;color:#e6e6e8;font-weight:400;transform:scaleX(1.0112);-webkit-text-stroke:0.3px #e6e6e8">single_shot_llm_call_async</span>
<span class="t" id="t20" style="left:687.17px;top:630.51px;font-size:24.5px;color:#8a8a8a;font-weight:400;transform:scaleX(1.0790);-webkit-text-stroke:0.35px #8a8a8a">0s</span>
<span class="t" id="t21" style="left:198.14px;top:686.08px;font-size:29.5px;color:#e6e6e8;font-weight:400;transform:scaleX(1.0136);-webkit-text-stroke:0.3px #e6e6e8">eval_iteration_0</span>
<span class="t" id="t22" style="left:228.14px;top:742.08px;font-size:29.5px;color:#e6e6e8;font-weight:400;transform:scaleX(1.0075);-webkit-text-stroke:0.3px #e6e6e8">evaluate_research_complet...</span>
<span class="t" id="t23" style="left:670.19px;top:742.51px;font-size:24.5px;color:#8a8a8a;font-weight:400;transform:scaleX(0.9824);-webkit-text-stroke:0.35px #8a8a8a">17.0s</span>
<span class="t" id="t24" style="left:269.15px;top:798.08px;font-size:29.5px;color:#e6e6e8;font-weight:400;transform:scaleX(1.0112);-webkit-text-stroke:0.3px #e6e6e8">single_shot_llm_call_async</span>
<span class="t" id="t25" style="left:647.17px;top:798.51px;font-size:24.5px;color:#8a8a8a;font-weight:400;transform:scaleX(1.0790);-webkit-text-stroke:0.35px #8a8a8a">0s</span>
<span class="t" id="t26" style="left:269.15px;top:854.08px;font-size:29.5px;color:#e6e6e8;font-weight:400;transform:scaleX(1.0112);-webkit-text-stroke:0.3px #e6e6e8">single_shot_llm_call_async</span>
<span class="t" id="t27" style="left:647.17px;top:854.51px;font-size:24.5px;color:#8a8a8a;font-weight:400;transform:scaleX(1.0790);-webkit-text-stroke:0.35px #8a8a8a">0s</span>
<span class="t" id="t28" style="left:229.15px;top:910.08px;font-size:29.5px;color:#e6e6e8;font-weight:400;transform:scaleX(0.9993);-webkit-text-stroke:0.3px #e6e6e8">search_all_queries</span>
<span class="t" id="t29" style="left:522.17px;top:910.51px;font-size:24.5px;color:#8a8a8a;font-weight:400;transform:scaleX(1.0664);-webkit-text-stroke:0.35px #8a8a8a">59.3s</span>
<span class="t" id="t30" style="left:269.15px;top:966.08px;font-size:29.5px;color:#e6e6e8;font-weight:400;transform:scaleX(0.9945);-webkit-text-stroke:0.3px #e6e6e8">search_and_summarize</span>
<span class="t" id="t31" style="left:628.17px;top:966.51px;font-size:24.5px;color:#8a8a8a;font-weight:400;transform:scaleX(1.0832);-webkit-text-stroke:0.35px #8a8a8a">48.0s</span>
<span class="t" id="t32" style="left:309.15px;top:1022.08px;font-size:29.5px;color:#e6e6e8;font-weight:400;transform:scaleX(0.9993);-webkit-text-stroke:0.3px #e6e6e8">tavily_search_async</span>
<span class="t" id="t33" style="left:591.17px;top:1022.51px;font-size:24.5px;color:#8a8a8a;font-weight:400;transform:scaleX(1.0790);-webkit-text-stroke:0.35px #8a8a8a">0s</span>
<span class="t" id="t34" style="left:319.15px;top:1078.08px;font-size:29.5px;color:#e6e6e8;font-weight:400;transform:scaleX(1.0242);-webkit-text-stroke:0.3px #e6e6e8">summarize-content</span>
<span class="t" id="t35" style="left:347.15px;top:1134.08px;font-size:29.5px;color:#e6e6e8;font-weight:400;transform:scaleX(1.0037);-webkit-text-stroke:0.3px #e6e6e8">single_shot_llm_call_as...</span>
<span class="t" id="t36" style="left:701.67px;top:1134.51px;font-size:24.5px;color:#8a8a8a;font-weight:400;transform:scaleX(1.0595);-webkit-text-stroke:0.35px #8a8a8a">0s</span>
<span class="t" id="t37" style="left:347.15px;top:1190.08px;font-size:29.5px;color:#e6e6e8;font-weight:400;transform:scaleX(1.0037);-webkit-text-stroke:0.3px #e6e6e8">single_shot_llm_call_as...</span>
<span class="t" id="t38" style="left:701.67px;top:1190.51px;font-size:24.5px;color:#8a8a8a;font-weight:400;transform:scaleX(1.0595);-webkit-text-stroke:0.35px #8a8a8a">0s</span>
<span class="t" id="t39" style="left:347.15px;top:1246.08px;font-size:29.5px;color:#e6e6e8;font-weight:400;transform:scaleX(1.0037);-webkit-text-stroke:0.3px #e6e6e8">single_shot_llm_call_as...</span>
<span class="t" id="t40" style="left:701.67px;top:1246.51px;font-size:24.5px;color:#8a8a8a;font-weight:400;transform:scaleX(1.0595);-webkit-text-stroke:0.35px #8a8a8a">0s</span>
<span class="t" id="t41" style="left:189.15px;top:1302.08px;font-size:29.5px;color:#e6e6e8;font-weight:400;transform:scaleX(1.0381);-webkit-text-stroke:0.3px #e6e6e8">filter_results</span>
<span class="t" id="t42" style="left:398.18px;top:1302.51px;font-size:24.5px;color:#8a8a8a;font-weight:400;transform:scaleX(0.9994);-webkit-text-stroke:0.35px #8a8a8a">16.7s</span>
<span class="t" id="t43" style="left:1101.97px;top:74.80px;font-size:28px;color:#ffffff;font-weight:700;transform:scaleX(1.0317)">Code</span>
<span class="t" id="t44" style="left:1171.61px;top:155.12px;font-size:28.5px;color:#dcdce0;font-weight:400;transform:scaleX(1.0056);-webkit-text-stroke:0.25px #dcdce0">Files</span>
<span class="t" id="t45" style="left:1688.19px;top:154.78px;font-size:29.5px;color:#ffffff;font-weight:400;transform:scaleX(1.0105);-webkit-text-stroke:0.4px #ffffff">agent.py</span>
<span class="t" id="t46" style="left:1216.14px;top:232.28px;font-size:29.5px;color:#ffffff;font-weight:400;transform:scaleX(0.9851);-webkit-text-stroke:0.25px #ffffff">agent.py</span>
<span class="t" id="t47" style="left:1216.13px;top:288.28px;font-size:29.5px;color:#d4d4d8;font-weight:400;transform:scaleX(0.9938);-webkit-text-stroke:0.25px #d4d4d8">libs</span>
<span class="t" id="t48" style="left:1262.08px;top:344.28px;font-size:29.5px;color:#d4d4d8;font-weight:400;transform:scaleX(0.9570);-webkit-text-stroke:0.25px #d4d4d8">__init__.py</span>
<span class="t" id="t49" style="left:1260.10px;top:400.28px;font-size:29.5px;color:#d4d4d8;font-weight:400;transform:scaleX(1.0205);-webkit-text-stroke:0.25px #d4d4d8">utils</span>
<span class="t" id="t50" style="left:1306.08px;top:456.28px;font-size:29.5px;color:#d4d4d8;font-weight:400;transform:scaleX(0.9570);-webkit-text-stroke:0.25px #d4d4d8">__init__.py</span>
<span class="t" id="t51" style="left:1304.13px;top:512.28px;font-size:29.5px;color:#d4d4d8;font-weight:400;transform:scaleX(0.9935);-webkit-text-stroke:0.25px #d4d4d8">data_types.py</span>
<span class="t" id="t52" style="left:1304.14px;top:568.28px;font-size:29.5px;color:#d4d4d8;font-weight:400;transform:scaleX(0.9872);-webkit-text-stroke:0.25px #d4d4d8">generation.py</span>
<span class="t" id="t53" style="left:1304.15px;top:624.28px;font-size:29.5px;color:#d4d4d8;font-weight:400;transform:scaleX(0.9749);-webkit-text-stroke:0.25px #d4d4d8">llms.py</span>
<span class="t" id="t54" style="left:1304.14px;top:680.28px;font-size:29.5px;color:#d4d4d8;font-weight:400;transform:scaleX(0.9844);-webkit-text-stroke:0.25px #d4d4d8">log.py</span>
<span class="t" id="t55" style="left:1305.12px;top:736.28px;font-size:29.5px;color:#d4d4d8;font-weight:400;transform:scaleX(0.9669);-webkit-text-stroke:0.25px #d4d4d8">tavily_search.py</span>
</body></html>
